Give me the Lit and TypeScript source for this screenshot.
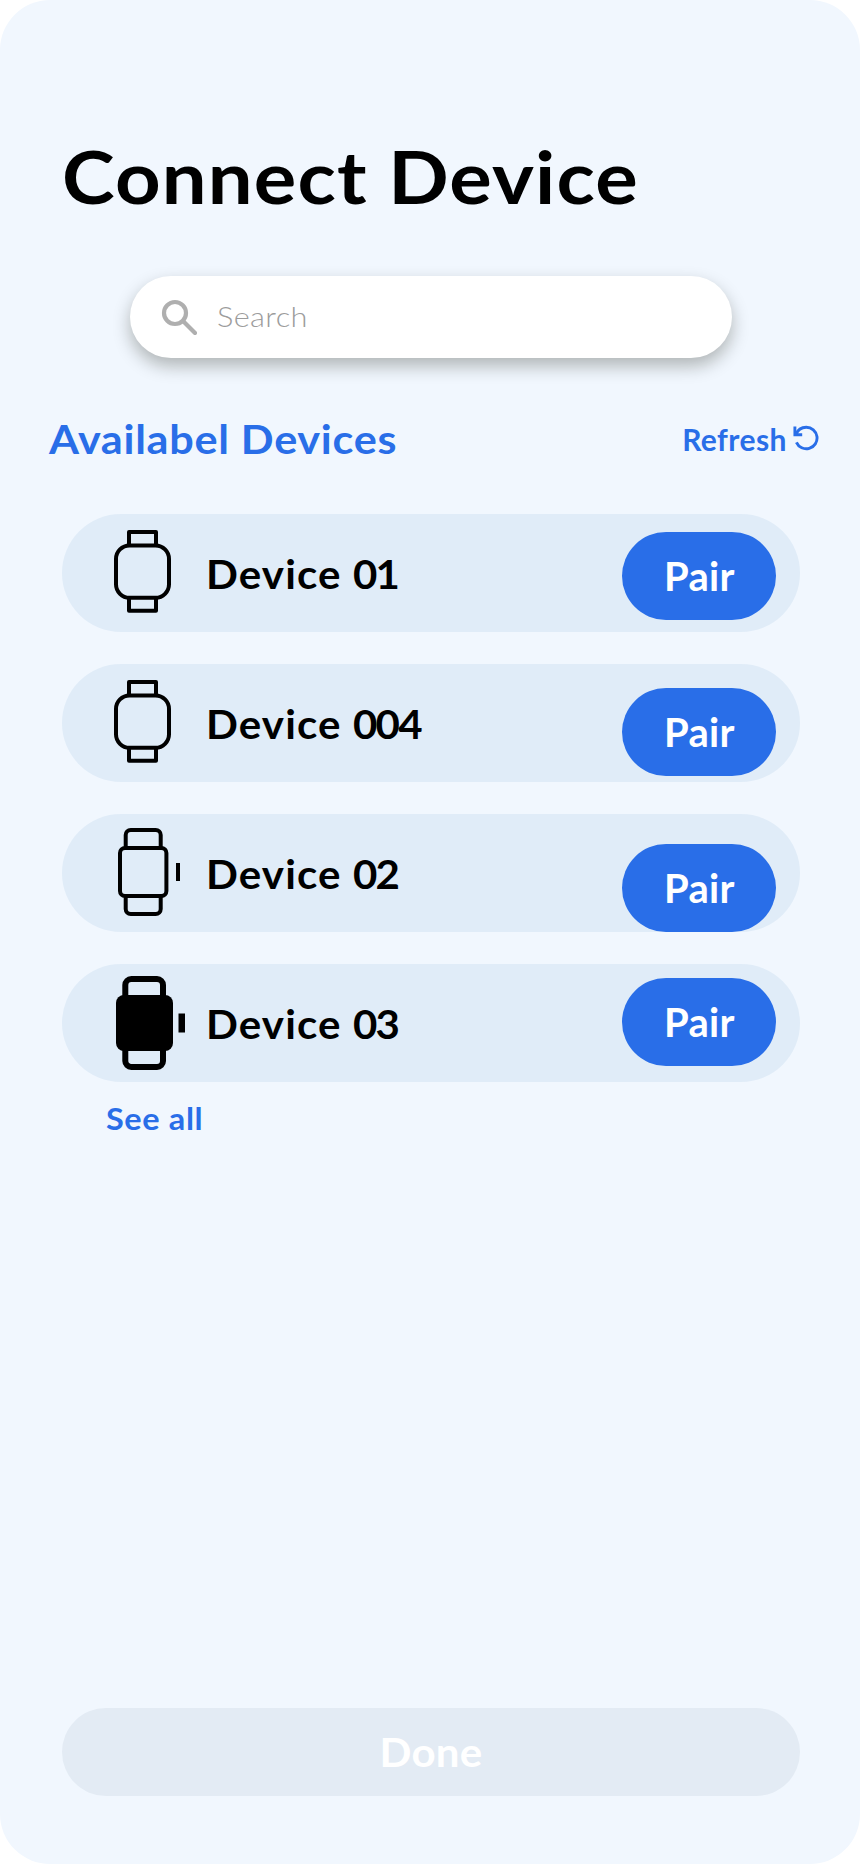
import { LitElement, html, svg, css } from "lit";
import { customElement } from "lit/decorators.js";
import { classMap } from "lit/directives/class-map.js";

type WatchKind = "round" | "slim" | "solid";

const watchIcons = {
  round: svg`
    <g fill="none" stroke="#000" stroke-width="4" stroke-linejoin="round">
      <rect x="54" y="31.4" width="53" height="52.4" rx="13.5" />
      <path d="M67 31.4V18H94V31.4M67 83.8V96.8H94V83.8" />
    </g>`,
  slim: svg`
    <g fill="none" stroke="#000" stroke-width="4">
      <rect x="58" y="34" width="46.4" height="48" rx="5" />
      <path d="M63.7 34V21a5 5 0 0 1 5-5H93.7a5 5 0 0 1 5 5V34M63.7 82V95a5 5 0 0 0 5 5H93.7a5 5 0 0 0 5-5V82" />
      <path d="M116 49V67" />
    </g>`,
  solid: svg`
    <rect x="54" y="31" width="57" height="56" rx="8" />
    <path fill="none" stroke="#000" stroke-width="6" d="M63.3 34V21a6 6 0 0 1 6-6H95a6 6 0 0 1 6 6V34M63.3 84V97a6 6 0 0 0 6 6H95a6 6 0 0 0 6-6V84" />
    <path d="M116.5 49.5h6.5v19h-6.5z" />`,
};

const devices: { id: string; icon: WatchKind; drop: string }[] = [
  { id: "01", icon: "round", drop: "drop-a" },
  { id: "004", icon: "round", drop: "drop-b" },
  { id: "02", icon: "slim", drop: "drop-c" },
  { id: "03", icon: "solid", drop: "drop-d" },
];

@customElement("app-root")
export class AppRoot extends LitElement {
  static styles = css`
    :host { display: block; background: #fff; }
    * { box-sizing: border-box; }
    button { border: 0; margin: 0; background: none; font: inherit; text-align: left; }
    .screen {
      display: flex; flex-direction: column;
      width: 860px; height: 1864px; padding: 132px 60px 68px 62px;
      background: #f1f7fe; border-radius: 50px;
      font-family: Lato, "Open Sans", sans-serif; font-weight: 700; white-space: nowrap;
    }
    .title {
      align-self: flex-start; margin: 0; font-size: 73px; line-height: 88px; letter-spacing: 1.05px; font-weight: 700; color: #000;
      transform: scaleX(1.09); transform-origin: left;
    }
    .search {
      display: flex; align-items: center; width: 602px; height: 82px; margin: 56px 0 0 68px;
      padding-left: 31px; border-radius: 41px; background: #fff;
      box-shadow: 0 8px 17px rgba(16, 20, 8, 0.29);
    }
    .search-text {
      margin-left: 20px; font-size: 28px; font-weight: 300; line-height: 80px; letter-spacing: 0.3px; color: #9c9c9c;
      margin-top: -2px; transform: scaleX(1.1); transform-origin: left;
    }
    .section { display: flex; justify-content: space-between; height: 48px; margin: 56.5px -20px 0 -13px; line-height: 48px; color: #296ee8; }
    .heading { margin: 0; font-size: 40px; line-height: 49px; font-weight: 700; letter-spacing: 0.65px; transform: scaleX(1.08); transform-origin: left; }
    .refresh { display: flex; align-items: flex-start; padding: 0; font-size: 30px; line-height: 48px; letter-spacing: 0.45px; color: inherit; }
    .refresh-icon { margin: 10.5px 1px 0 6px; }
    .list { display: grid; gap: 32px; margin-top: 51.5px; }
    .row { display: flex; align-items: flex-start; width: 738px; height: 118px; border-radius: 59px; background: #e0ecf8; }
    .name { font-size: 40px; line-height: 120px; letter-spacing: 1.1px; color: #000; transform: scaleX(1.05); transform-origin: left; }
    .digits { letter-spacing: -1.7px; }
    .pair {
      width: 154px; height: 87.6px; margin-left: auto; margin-right: 24px; padding: 0 0 0 42px; border-radius: 44px;
      background: #296ee8; color: #fff; font-size: 40px; line-height: 89px; letter-spacing: 0.3px;
    }
    .drop-a { margin-top: 18px; }
    .drop-b { margin-top: 24px; }
    .drop-c { margin-top: 30px; }
    .drop-d { margin-top: 14px; }
    .see-all {
      align-self: flex-start; margin: 18.4px 0 0 44px; padding: 0; font-size: 30px; line-height: 36px; letter-spacing: 0.6px; color: #296ee8;
      transform: scaleX(1.08); transform-origin: left;
    }
    .done {
      width: 738px; height: 87.6px; margin-top: auto; padding: 0; border-radius: 44px; text-align: center;
      background: #e3ebf4; color: #fff; font-size: 40px; line-height: 87px; letter-spacing: 0.2px;
    }
    .done-text { display: inline-block; transform: scaleX(1.05); }
  `;

  render() {
    return html`
      <main class="screen">
        <h1 class="title">Connect Device</h1>
        <div class="search">
          <svg width="36" height="36" viewBox="0 0 36 36" fill="none" stroke="#afafaf" stroke-width="4.2">
            <circle cx="14" cy="14" r="11" />
            <path d="M22 22L34 34" stroke-linecap="round" />
          </svg>
          <span class="search-text">Search</span>
        </div>
        <div class="section">
          <h2 class="heading">Availabel Devices</h2>
          <button class="refresh">
            Refresh
            <svg class="refresh-icon" width="26" height="26" viewBox="0 0 26 26" fill="none" stroke="#296ee8" stroke-width="2.9">
              <path d="M2.6 9.6C4.8 4.6 9 2.2 13.2 2.2A10.8 10.8 0 1 1 3.4 17.4" />
              <path d="M1.9 1.6V9.8H9.2" />
              <path d="M2 5L6 9.5H2z" fill="#296ee8" stroke="none" />
            </svg>
          </button>
        </div>
        <div class="list">
          ${devices.map(
            (d) => html`
              <div class="row">
                <svg width="144" height="118" viewBox="0 0 144 118">${watchIcons[d.icon]}</svg>
                <span class="name">Device <span class="digits">${d.id}</span></span>
                <button class=${classMap({ pair: true, [d.drop]: true })}>Pair</button>
              </div>
            `,
          )}
        </div>
        <button class="see-all">See all</button>
        <button class="done"><span class="done-text">Done</span></button>
      </main>
    `;
  }
}
